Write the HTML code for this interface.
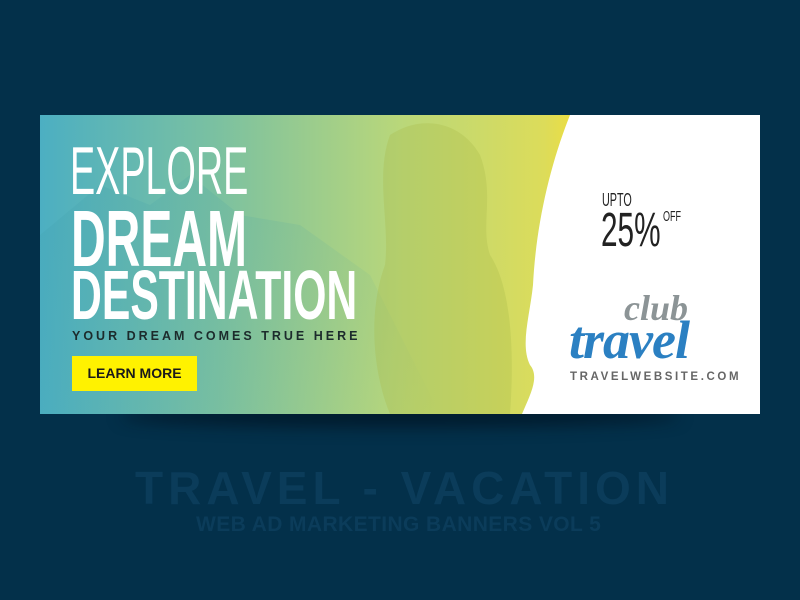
<!DOCTYPE html>
<html><head><style>
body{margin:0;width:800px;height:600px;background:#03304a;overflow:hidden;font-family:"Liberation Sans",sans-serif;position:relative}
.banner{position:absolute;left:40px;top:115px;width:720px;height:299px;overflow:hidden;background:linear-gradient(90deg,#4cafc2 0%,#7cc1a0 25%,#b9d77a 50%,#dcdc5a 70%,#f0de3c 75%)}
.sh{position:absolute;left:120px;top:405px;width:560px;height:22px;border-radius:50%;background:rgba(0,10,20,.55);filter:blur(8px)}
.t{position:absolute;white-space:nowrap;transform-origin:0 0;line-height:1}
</style></head><body>
<div class="sh"></div>
<div class="banner">
<svg width="720" height="299" style="position:absolute;left:0;top:0">
<defs><linearGradient id="d" x1="0" y1="0" x2="1" y2="1"><stop offset="0" stop-color="#3c9aa8" stop-opacity=".2"/><stop offset="1" stop-color="#3d9aa6" stop-opacity="0"/></linearGradient></defs>
<path d="M0 120 L60 70 L110 90 L150 60 L200 100 L260 110 L330 160 L400 299 L0 299Z" fill="url(#d)"/>
<path d="M350 20 C380 0 420 5 440 40 C455 80 440 110 450 140 C470 170 475 230 470 299 L350 299 C330 250 330 190 345 150 C350 110 335 60 350 20Z" fill="#a8b84a" opacity=".3"/>
<path d="M530 0 L720 0 L720 299 L482 299 C490 280 500 262 490 250 C480 230 490 200 493 170 C496 110 510 50 530 0Z" fill="#fff"/>
</svg>
<div class="t" style="left:30px;top:22px;font-size:68px;color:#fff;transform:scaleX(.555)">EXPLORE</div>
<div class="t" style="left:31px;top:84px;font-size:80px;color:#fff;font-weight:bold;transform:scaleX(.6)">DREAM</div>
<div class="t" style="left:31px;top:145px;font-size:70px;color:#fff;font-weight:bold;transform:scaleX(.61)">DESTINATION</div>
<div class="t" style="left:32px;top:215px;font-size:12.5px;color:#1c2b2c;font-weight:bold;letter-spacing:3px">YOUR DREAM COMES TRUE HERE</div>
<div style="position:absolute;left:32px;top:241px;width:125px;height:35px;background:#fff200;color:#1a1a1a;font-weight:bold;font-size:14px;text-align:center;line-height:35px">LEARN MORE</div>
<div class="t" style="left:562px;top:76px;font-size:18px;color:#222;transform:scaleX(.6)">UPTO</div>
<div class="t" style="left:561px;top:92px;font-size:48px;color:#222;transform:scaleX(.62)">25%</div>
<div class="t" style="left:623px;top:94px;font-size:15px;color:#222;transform:scaleX(.6)">OFF</div>
<div class="t" style="left:584px;top:175px;font-size:36px;color:#8c9496;font-weight:bold;font-style:italic;font-family:'Liberation Serif',serif">club</div>
<div class="t" style="left:529px;top:198px;font-size:54px;color:#2b80c2;font-weight:bold;font-style:italic;font-family:'Liberation Serif',serif;letter-spacing:-1px">travel</div>
<div class="t" style="left:530px;top:257px;font-size:11.5px;color:#666;font-weight:bold;letter-spacing:2.6px">TRAVELWEBSITE.COM</div>
</div>
<div class="t" style="left:135px;top:465px;font-size:46px;color:#0b3c5a;font-weight:bold;letter-spacing:5px">TRAVEL - VACATION</div>
<div class="t" style="left:196px;top:514px;font-size:21px;color:#0b3c5a;font-weight:bold;letter-spacing:0.4px">WEB AD MARKETING BANNERS VOL 5</div>
</body></html>
